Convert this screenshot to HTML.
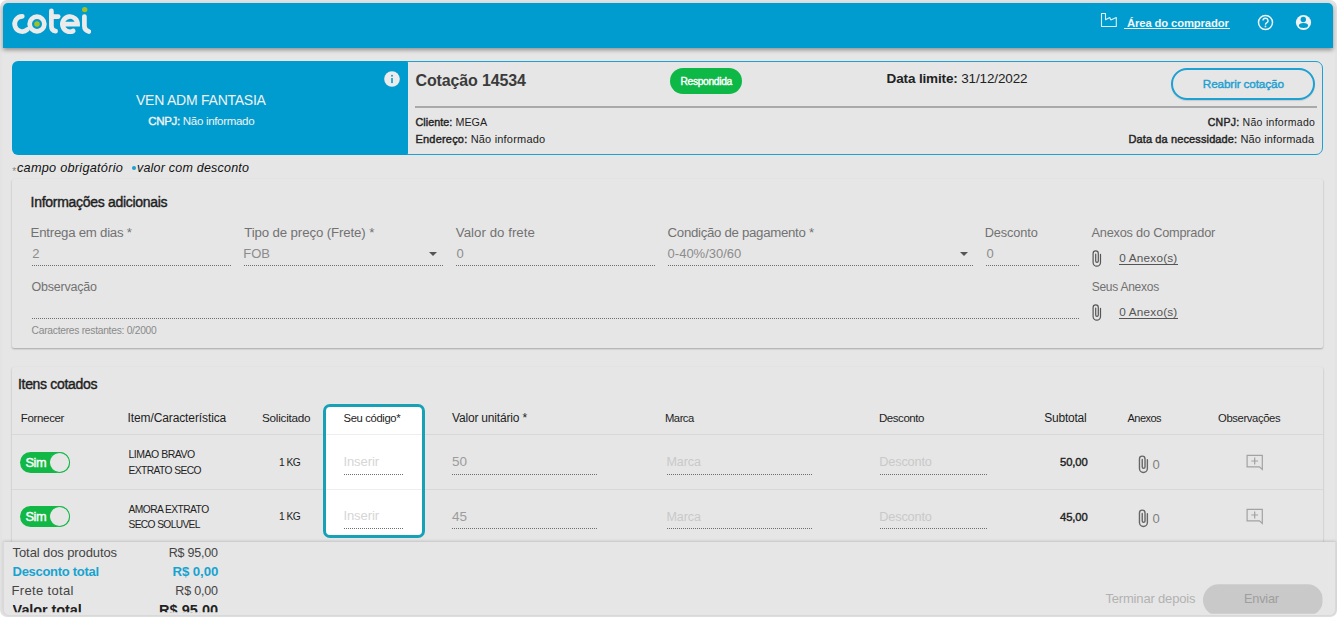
<!DOCTYPE html>
<html><head><meta charset="utf-8">
<style>
*{margin:0;padding:0;box-sizing:border-box}
html,body{width:1337px;height:620px;overflow:hidden;background:#fff}
body{font-family:"Liberation Sans",sans-serif;position:relative;color:#333}
.a{position:absolute}
.t{position:absolute;white-space:nowrap;line-height:normal}
.m{-webkit-text-stroke:0.4px currentColor}
.dot{position:absolute;height:1px;background-image:linear-gradient(to right,#6e6e6e 50%,transparent 50%);background-size:2px 1px}
.panel{position:absolute;background:#e6e6e6;box-shadow:0 1px 2px rgba(0,0,0,.28);border-radius:2px}
.tog{position:absolute;width:50px;height:21px;border-radius:11px;background:#12b846}
.tog i{position:absolute;left:28.5px;top:0;width:21.5px;height:21px;border-radius:50%;background:#e6e6e6;border:1.7px solid #12b846}
</style></head><body>
<div class="a" style="left:0;top:0;width:1337px;height:617px;background:#e3e3e3;border-radius:7px"></div>
<div class="a" style="left:2px;top:2px;width:1333px;height:614px;background:#e6e6e6;border-radius:5px"></div>
<div class="a" style="left:3px;top:3px;width:1330px;height:45px;background:#019ccf;border-radius:5px 5px 0 0;box-shadow:0 2px 4px rgba(0,0,0,.38)"></div>
<!-- logo -->
<svg class="a" style="left:0;top:0" width="100" height="45" viewBox="0 0 100 45">
  <g fill="none" stroke="#ebebeb" stroke-width="4.7" stroke-linecap="round">
    <path d="M22.3 16.3 A7.6 7.6 0 1 0 27.3 29.6"/>
    <circle cx="37" cy="24" r="7.35"/>
    <path d="M51.4 10.9 V26 Q51.4 30.6 55.6 31.2"/>
    <path d="M51.4 16.6 H58.2"/>
    <path d="M62.9 24.2 H77.6 A7.6 7.6 0 1 0 73.2 31"/>
    <path d="M84.4 16.6 V26 Q84.4 30.2 88.8 31.5"/>
  </g>
  <circle cx="37" cy="23.9" r="2.75" fill="#a6bf1e"/>
  <circle cx="84.7" cy="9.6" r="2.7" fill="#a6bf1e"/>
</svg>
<!-- header right icons -->
<svg class="a" style="left:1100px;top:12px" width="19" height="16" viewBox="1100 12 19 16"><path d="M1101.5 13.5 H1105.5 V19.8 L1109.8 17.6 L1110.8 19.9 L1116.3 17.5 V26.5 H1101.5 Z" fill="none" stroke="#dff0f7" stroke-width="1.1" stroke-linejoin="round"/></svg>
<div class="a" style="left:1124px;top:27.5px;width:106px;height:1px;background:#f0f0f0"></div>
<svg class="a" style="left:1256px;top:13px" width="19" height="19" viewBox="0 0 19 19"><circle cx="9.5" cy="9.5" r="7" fill="none" stroke="#f2f2f2" stroke-width="1.5"/><path d="M7 7.6 a2.5 2.4 0 1 1 3.6 2.2 c-0.9 0.5 -1.1 1 -1.1 2" fill="none" stroke="#f2f2f2" stroke-width="1.4"/><circle cx="9.5" cy="13.4" r="0.9" fill="#f2f2f2"/></svg>
<svg class="a" style="left:1294px;top:13px" width="19" height="19" viewBox="0 0 19 19"><circle cx="9.5" cy="9.5" r="7.6" fill="#f2f2f2"/><circle cx="9.3" cy="6.5" r="2.7" fill="#019ccf"/><ellipse cx="9.5" cy="12.5" rx="4.6" ry="2.5" fill="#019ccf"/></svg>

<!-- quote card -->
<div class="a" style="left:400px;top:61px;width:923px;height:94px;border:1px solid #1da0d2;border-radius:7px;background:#e6e6e6"></div>
<div class="a" style="left:12px;top:61px;width:396px;height:94px;background:#019ccf;border-radius:6px 2px 2px 6px"></div>
<svg class="a" style="left:383.5px;top:71px" width="16" height="16" viewBox="0 0 16 16"><circle cx="8" cy="8" r="7.8" fill="#ececec"/><rect x="7.2" y="7" width="1.6" height="5.1" fill="#019ccf"/><circle cx="8" cy="4.7" r="0.95" fill="#019ccf"/></svg>
<div class="a" style="left:670px;top:68px;width:72px;height:26px;border-radius:13px;background:#0db846"></div>
<div class="a" style="left:1171px;top:68px;width:144px;height:32px;border:2px solid #1da0d2;border-radius:16px;box-shadow:0 1px 1px rgba(0,0,0,.12)"></div>
<div class="a" style="left:415px;top:106px;width:902px;height:2px;background:#a9a9a9"></div>

<!-- legend -->
<div class="t" style="left:12.3px;top:165.5px;font-size:10px;color:#888">*</div>
<div class="a" style="left:131.5px;top:166.3px;width:4.2px;height:4.2px;border-radius:50%;background:#1aa0d2"></div>

<!-- info panel -->
<div class="panel" style="left:12px;top:179px;width:1311px;height:169px"></div>
<div class="dot" style="left:32px;top:265px;width:199px"></div>
<div class="dot" style="left:244px;top:265px;width:199px"></div>
<div class="dot" style="left:456px;top:265px;width:199px"></div>
<div class="dot" style="left:668px;top:265px;width:305px"></div>
<div class="dot" style="left:986px;top:265px;width:93px"></div>
<div class="dot" style="left:32px;top:318px;width:1047px"></div>
<svg class="a" style="left:429px;top:252px" width="8" height="4" viewBox="0 0 8 4"><path d="M0 0H8L4 4Z" fill="#555"/></svg>
<svg class="a" style="left:960px;top:252px" width="8" height="4" viewBox="0 0 8 4"><path d="M0 0H8L4 4Z" fill="#555"/></svg>
<svg class="a" style="left:1088px;top:247.6px" width="20" height="23" viewBox="0 0 20 23"><g transform="scale(1.0)"><path d="M12.5 6.3 V14.5 a3.7 3.7 0 0 1 -7.4 0 V5.5 a2.6 2.6 0 0 1 5.2 0 V13 a1.3 1.3 0 0 1 -2.6 0 V6.1" fill="none" stroke="#555" stroke-width="1.2" stroke-linecap="round"/></g></svg>
<div class="a" style="left:1119px;top:264px;width:59px;height:1px;background:#555"></div>
<svg class="a" style="left:1088px;top:301.6px" width="20" height="23" viewBox="0 0 20 23"><g transform="scale(1.0)"><path d="M12.5 6.3 V14.5 a3.7 3.7 0 0 1 -7.4 0 V5.5 a2.6 2.6 0 0 1 5.2 0 V13 a1.3 1.3 0 0 1 -2.6 0 V6.1" fill="none" stroke="#555" stroke-width="1.2" stroke-linecap="round"/></g></svg>
<div class="a" style="left:1119px;top:318px;width:59px;height:1px;background:#555"></div>

<!-- items panel -->
<div class="panel" style="left:12px;top:367px;width:1311px;height:200px"></div>
<div class="a" style="left:12px;top:434px;width:1311px;height:1px;background:#d8d8d8"></div>
<div class="a" style="left:12px;top:489px;width:1311px;height:1px;background:#d8d8d8"></div>
<div class="a" style="left:323px;top:404px;width:102px;height:134px;border:3px solid #17a1b6;border-radius:7px;background:#fff"></div>
<div class="a" style="left:326px;top:434px;width:96px;height:1px;background:#eeeeee"></div>
<div class="a" style="left:326px;top:489px;width:96px;height:1px;background:#eeeeee"></div>
<div class="tog" style="left:20px;top:452px"><i></i></div>
<div class="dot" style="left:344px;top:474px;width:60px"></div>
<div class="dot" style="left:452px;top:474px;width:146px"></div>
<div class="dot" style="left:667px;top:474px;width:145px"></div>
<div class="dot" style="left:880px;top:474px;width:108px"></div>
<svg class="a" style="left:1134.3px;top:452.8px" width="20" height="23" viewBox="0 0 20 23"><g transform="scale(1.07)"><path d="M12.5 6.3 V14.5 a3.7 3.7 0 0 1 -7.4 0 V5.5 a2.6 2.6 0 0 1 5.2 0 V13 a1.3 1.3 0 0 1 -2.6 0 V6.1" fill="none" stroke="#666" stroke-width="1.3" stroke-linecap="round"/></g></svg>
<svg class="a" style="left:1246px;top:454px" width="18" height="17" viewBox="0 0 18 17"><path d="M1.1 1.3 H16.3 V15.4 L13.4 12.8 H1.1 Z" fill="none" stroke="#a2a2a2" stroke-width="1.2"/><path d="M8.7 3.6 V10.4 M5.3 7 H12.1" stroke="#a2a2a2" stroke-width="1.2"/></svg>
<div class="tog" style="left:20px;top:506px"><i></i></div>
<div class="dot" style="left:344px;top:528px;width:60px"></div>
<div class="dot" style="left:452px;top:528px;width:146px"></div>
<div class="dot" style="left:667px;top:528px;width:145px"></div>
<div class="dot" style="left:880px;top:528px;width:108px"></div>
<svg class="a" style="left:1134.3px;top:507.3px" width="20" height="23" viewBox="0 0 20 23"><g transform="scale(1.07)"><path d="M12.5 6.3 V14.5 a3.7 3.7 0 0 1 -7.4 0 V5.5 a2.6 2.6 0 0 1 5.2 0 V13 a1.3 1.3 0 0 1 -2.6 0 V6.1" fill="none" stroke="#666" stroke-width="1.3" stroke-linecap="round"/></g></svg>
<svg class="a" style="left:1246px;top:508px" width="18" height="17" viewBox="0 0 18 17"><path d="M1.1 1.3 H16.3 V15.4 L13.4 12.8 H1.1 Z" fill="none" stroke="#a2a2a2" stroke-width="1.2"/><path d="M8.7 3.6 V10.4 M5.3 7 H12.1" stroke="#a2a2a2" stroke-width="1.2"/></svg>

<!-- footer -->
<div class="a" style="left:2.5px;top:542px;width:1333px;height:74px;background:#e6e6e6;border:1px solid #d9d9d9;border-top:0;border-radius:0 0 6px 6px;box-shadow:0 -1px 3px rgba(0,0,0,.16)"></div>
<div class="a" style="left:1203px;top:584.2px;width:119.5px;height:32px;border-radius:16px;background:#c9c9c9;clip-path:inset(0 0 2.4px 0)"></div>
<div class="t" style="left:1127.0px;top:16.6px;font-size:11.25px;color:#f4f4f4;letter-spacing:-0.118px"><b>Área do comprador</b></div>
<div class="t" style="left:136.0px;top:91.7px;font-size:14.0px;color:#f2f2f2;letter-spacing:-0.239px">VEN ADM FANTASIA</div>
<div class="t" style="left:148.2px;top:115px;font-size:11.5px;color:#f2f2f2;letter-spacing:-0.303px"><span class="m">CNPJ:</span> Não informado</div>
<div class="t" style="left:415.5px;top:72px;font-size:16.0px;color:#3b3b3b;letter-spacing:-0.139px"><b>Cotação 14534</b></div>
<div class="t" style="left:680.5px;top:76px;font-size:10.25px;color:#ffffff;letter-spacing:-0.334px"><span class="m">Respondida</span></div>
<div class="t" style="left:886.6px;top:71px;font-size:13.5px;color:#222;letter-spacing:-0.144px"><b>Data limite:</b> 31/12/2022</div>
<div class="t" style="left:1202.8px;top:77px;font-size:11.75px;color:#1c9fd1;letter-spacing:-0.129px"><span class="m">Reabrir cotação</span></div>
<div class="t" style="left:415.5px;top:115.6px;font-size:10.75px;color:#222;letter-spacing:0.048px"><span class="m">Cliente:</span> MEGA</div>
<div class="t" style="left:415.5px;top:132.7px;font-size:11.0px;color:#222;letter-spacing:0.194px"><span class="m">Endereço:</span> Não informado</div>
<div class="t" style="left:1207.7px;top:115.6px;font-size:10.5px;color:#222;letter-spacing:0.279px"><span class="m">CNPJ:</span> Não informado</div>
<div class="t" style="left:1128.4px;top:132.8px;font-size:11.0px;color:#222;letter-spacing:0.124px"><span class="m">Data da necessidade:</span> Não informada</div>
<div class="t" style="left:17.0px;top:159.5px;font-size:12.75px;color:#111;letter-spacing:0.233px;font-style:italic">campo obrigatório</div>
<div class="t" style="left:137.0px;top:160.5px;font-size:12.5px;color:#111;letter-spacing:0.21px;font-style:italic">valor com desconto</div>
<div class="t" style="left:30.6px;top:194px;font-size:14.0px;color:#1e1e1e;letter-spacing:-0.295px"><span class="m">Informações adicionais</span></div>
<div class="t" style="left:30.6px;top:225.2px;font-size:13.25px;color:#727272;letter-spacing:-0.248px">Entrega em dias *</div>
<div class="t" style="left:244.2px;top:225.2px;font-size:13.25px;color:#727272;letter-spacing:-0.12px">Tipo de preço (Frete) *</div>
<div class="t" style="left:455.8px;top:225.2px;font-size:13.25px;color:#727272;letter-spacing:0.039px">Valor do frete</div>
<div class="t" style="left:667.6px;top:225.2px;font-size:13.25px;color:#727272;letter-spacing:-0.308px">Condição de pagamento *</div>
<div class="t" style="left:984.7px;top:225.2px;font-size:12.75px;color:#727272;letter-spacing:-0.096px">Desconto</div>
<div class="t" style="left:1091.5px;top:225.2px;font-size:12.75px;color:#727272;letter-spacing:-0.212px">Anexos do Comprador</div>
<div class="t" style="left:32.3px;top:246.2px;font-size:13.0px;color:#8c8c8c">2</div>
<div class="t" style="left:243.2px;top:246.2px;font-size:13.0px;color:#8c8c8c">FOB</div>
<div class="t" style="left:456.5px;top:246.2px;font-size:13.0px;color:#8c8c8c">0</div>
<div class="t" style="left:667.6px;top:246.2px;font-size:13.0px;color:#8c8c8c">0-40%/30/60</div>
<div class="t" style="left:986.5px;top:246.2px;font-size:13.0px;color:#8c8c8c">0</div>
<div class="t" style="left:1119.2px;top:251.4px;font-size:11.75px;color:#555;letter-spacing:0.211px">0 Anexo(s)</div>
<div class="t" style="left:1119.2px;top:305.4px;font-size:11.75px;color:#555;letter-spacing:0.211px">0 Anexo(s)</div>
<div class="t" style="left:31.6px;top:280px;font-size:12.5px;color:#727272;letter-spacing:-0.227px">Observação</div>
<div class="t" style="left:1091.7px;top:280px;font-size:12.0px;color:#727272;letter-spacing:-0.261px">Seus Anexos</div>
<div class="t" style="left:31.6px;top:325px;font-size:10.25px;color:#8a8a8a;letter-spacing:-0.262px">Caracteres restantes: 0/2000</div>
<div class="t" style="left:18px;top:376px;font-size:14.0px;color:#1e1e1e;letter-spacing:-0.323px"><span class="m">Itens cotados</span></div>
<div class="t" style="left:20.8px;top:412.4px;font-size:11.5px;color:#1e1e1e;letter-spacing:-0.341px">Fornecer</div>
<div class="t" style="left:127.5px;top:411.4px;font-size:12.0px;color:#1e1e1e;letter-spacing:-0.107px">Item/Característica</div>
<div class="t" style="left:262.0px;top:411.4px;font-size:11.75px;color:#1e1e1e;letter-spacing:-0.268px">Solicitado</div>
<div class="t" style="left:343.6px;top:412.4px;font-size:11.25px;color:#1e1e1e;letter-spacing:-0.369px">Seu código*</div>
<div class="t" style="left:452.0px;top:411.4px;font-size:12.0px;color:#1e1e1e;letter-spacing:-0.183px">Valor unitário *</div>
<div class="t" style="left:665.0px;top:412.4px;font-size:11.25px;color:#1e1e1e;letter-spacing:-0.5px">Marca</div>
<div class="t" style="left:879.0px;top:412.4px;font-size:11.5px;color:#1e1e1e;letter-spacing:-0.455px">Desconto</div>
<div class="t" style="left:1044.3px;top:411.4px;font-size:12.0px;color:#1e1e1e;letter-spacing:-0.238px">Subtotal</div>
<div class="t" style="left:1127.6px;top:412.4px;font-size:11.0px;color:#1e1e1e;letter-spacing:-0.558px">Anexos</div>
<div class="t" style="left:1218.0px;top:412.4px;font-size:11.25px;color:#1e1e1e;letter-spacing:-0.366px">Observações</div>
<div class="t" style="left:25.5px;top:455px;font-size:12.75px;color:#ffffff;letter-spacing:-0.418px"><span class="m">Sim</span></div>
<div class="t" style="left:128.5px;top:448.3px;font-size:10.5px;color:#222;letter-spacing:-0.491px">LIMAO BRAVO</div>
<div class="t" style="left:128.5px;top:465px;font-size:10.25px;color:#222;letter-spacing:-0.58px">EXTRATO SECO</div>
<div class="t" style="left:279.0px;top:457px;font-size:10.25px;color:#222;letter-spacing:-0.528px">1 KG</div>
<div class="t" style="left:343.4px;top:453.8px;font-size:13.0px;color:#d6d6d6;letter-spacing:-0.065px">Inserir</div>
<div class="t" style="left:452.0px;top:454.3px;font-size:13.5px;color:#9c9c9c">50</div>
<div class="t" style="left:666.4px;top:455.3px;font-size:12.5px;color:#c9c9c9;letter-spacing:-0.044px">Marca</div>
<div class="t" style="left:879.3px;top:454.3px;font-size:12.75px;color:#c9c9c9;letter-spacing:-0.182px">Desconto</div>
<div class="t" style="left:1060.0px;top:456.3px;font-size:11.25px;color:#222;letter-spacing:-0.124px"><span class="m">50,00</span></div>
<div class="t" style="left:1152.5px;top:457px;font-size:13.0px;color:#808080">0</div>
<div class="t" style="left:25.5px;top:509.3px;font-size:12.75px;color:#ffffff;letter-spacing:-0.418px"><span class="m">Sim</span></div>
<div class="t" style="left:128.5px;top:503.6px;font-size:10.25px;color:#222;letter-spacing:-0.56px">AMORA EXTRATO</div>
<div class="t" style="left:128.5px;top:519.3px;font-size:10.25px;color:#222;letter-spacing:-0.653px">SECO SOLUVEL</div>
<div class="t" style="left:279.0px;top:511.3px;font-size:10.25px;color:#222;letter-spacing:-0.528px">1 KG</div>
<div class="t" style="left:343.4px;top:508.1px;font-size:13.0px;color:#d6d6d6;letter-spacing:-0.065px">Inserir</div>
<div class="t" style="left:452.0px;top:508.6px;font-size:13.5px;color:#9c9c9c">45</div>
<div class="t" style="left:666.4px;top:509.6px;font-size:12.5px;color:#c9c9c9;letter-spacing:-0.044px">Marca</div>
<div class="t" style="left:879.3px;top:508.6px;font-size:12.75px;color:#c9c9c9;letter-spacing:-0.182px">Desconto</div>
<div class="t" style="left:1060.0px;top:510.6px;font-size:11.25px;color:#222;letter-spacing:-0.124px"><span class="m">45,00</span></div>
<div class="t" style="left:1152.5px;top:511.3px;font-size:13.0px;color:#808080">0</div>
<div class="t" style="left:12.6px;top:545px;font-size:13.0px;color:#444;letter-spacing:-0.102px">Total dos produtos</div>
<div class="t" style="left:168.7px;top:546px;font-size:12.5px;color:#444;letter-spacing:-0.212px">R$ 95,00</div>
<div class="t" style="left:12.6px;top:563.8px;font-size:13.0px;color:#17a3d0;letter-spacing:-0.298px"><b>Desconto total</b></div>
<div class="t" style="left:172.4px;top:563.8px;font-size:13.25px;color:#17a3d0;letter-spacing:-0.073px"><b>R$ 0,00</b></div>
<div class="t" style="left:11.6px;top:582.6px;font-size:13.0px;color:#444;letter-spacing:0.336px">Frete total</div>
<div class="t" style="left:175.3px;top:583.6px;font-size:12.5px;color:#444;letter-spacing:-0.188px">R$ 0,00</div>
<div class="t" style="left:12.6px;top:602.4px;font-size:14.5px;color:#222;letter-spacing:-0.087px;clip-path:inset(0 0 6.2px 0)"><b>Valor total</b></div>
<div class="t" style="left:159.0px;top:602.4px;font-size:14.5px;color:#222;letter-spacing:0.031px;clip-path:inset(0 0 6.2px 0)"><b>R$ 95,00</b></div>
<div class="t" style="left:1105.4px;top:591px;font-size:13.0px;color:#b2b2b2;letter-spacing:-0.17px">Terminar depois</div>
<div class="t" style="left:1244px;top:591px;font-size:12.75px;color:#9e9e9e;letter-spacing:-0.219px">Enviar</div>
</body></html>
